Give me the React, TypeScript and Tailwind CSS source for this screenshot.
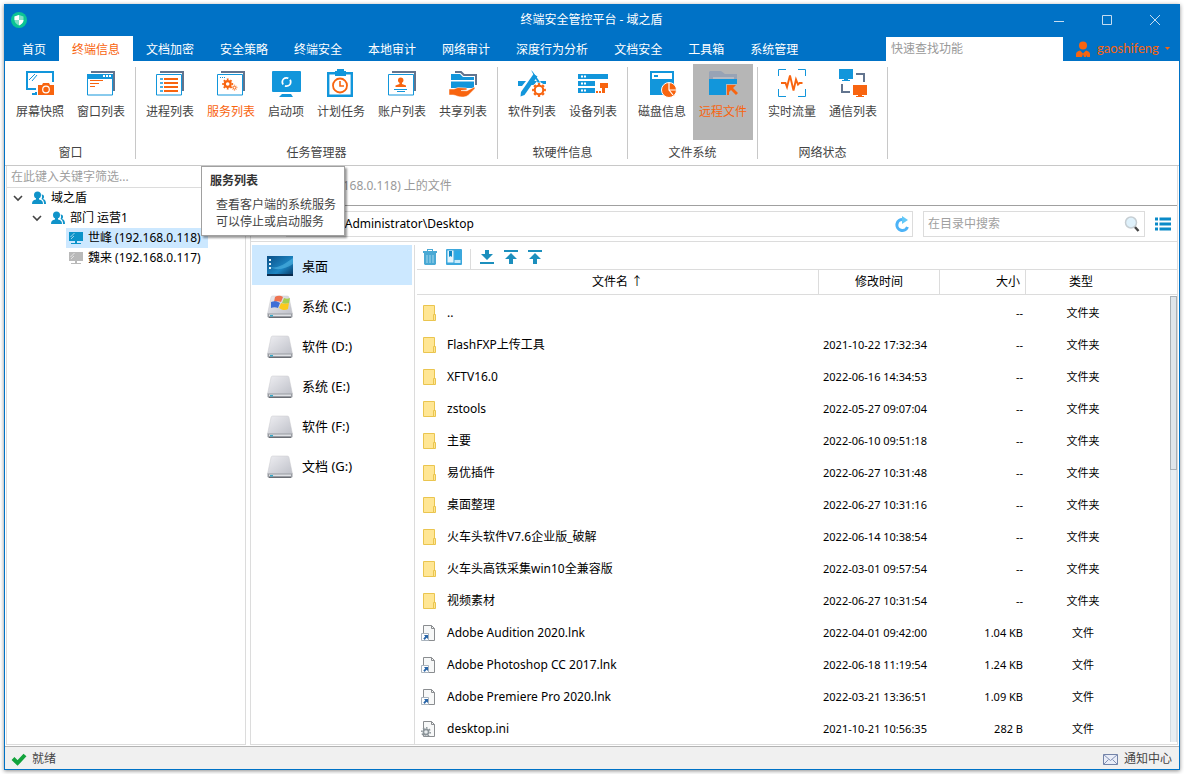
import { useState, type ReactNode } from "react";

type TRibbonItem = {
  name: string;
  icon: ReactNode;
  hot?: boolean;
  active?: boolean;
  narrow?: boolean;
};

type TRibbonGroup = {
  title: string;
  items: TRibbonItem[];
};

type TFileRow = {
  name: string;
  kind: "folder" | "link" | "ini";
  date: string;
  size: string;
  type: string;
};

const BLUE = "#1296db";
const ORANGE = "#f8640f";
const SLATE = "#62748e";

const Icon = ({ children }: { children: ReactNode }) => (
  <svg className="w-8 h-8 shrink-0" viewBox="0 0 32 32" fill="none">
    {children}
  </svg>
);

const Gear = ({ x, y, r, w }: { x: number; y: number; r: number; w: number }) => (
  <g stroke={ORANGE}>
    <circle cx={x} cy={y} r={r} strokeWidth={w} />
    <circle
      cx={x}
      cy={y}
      r={r + w / 2 + 0.6}
      strokeWidth={w * 0.8}
      pathLength={16}
      strokeDasharray="1 1"
      strokeDashoffset={0.5}
    />
  </g>
);

// two stacked windows, the base of several ribbon icons
const WindowStack = ({ children }: { children: ReactNode }) => (
  <Icon>
    <path d="M6 5h23v19" stroke={SLATE} strokeWidth="2" />
    <path d="M2.5 7.5h25v20.5h-25z" fill="#fff" stroke={BLUE} />
    {children}
  </Icon>
);

const Monitor = ({ x, y, color }: { x: number; y: number; color: string }) => (
  <path d={`M${x} ${y}h14v10h-5v1h2v1h-8v-1h2v-1h-5z`} fill={color} />
);

const groups: TRibbonGroup[] = [
  {
    title: "窗口",
    items: [
      {
        name: "屏幕快照",
        icon: (
          <Icon>
            <path d="M12 22H3V5h26v10" stroke={BLUE} strokeWidth="2" />
            <path d="M5 13l6-6M8 14l5-6" stroke={BLUE} />
            <path d="M8 27h4v-2" stroke={BLUE} strokeWidth="2" />
            <path d="M14 18h4l1-2h6l1 2h4v10H14z" fill={ORANGE} />
            <circle cx="22" cy="22.5" r="3.3" stroke="#fff" strokeWidth="1.2" />
          </Icon>
        ),
      },
      {
        name: "窗口列表",
        icon: (
          <WindowStack>
            <path d="M2 7h26v5H2z" fill={BLUE} />
            <path d="M18 9h2M21 9h2M24 9h2" stroke="#fff" strokeWidth="2" />
            <path d="M5 13.5h13M5 16.5h9M5 19.5h5" stroke={ORANGE} />
          </WindowStack>
        ),
      },
    ],
  },
  {
    title: "任务管理器",
    items: [
      {
        name: "进程列表",
        icon: (
          <WindowStack>
            <path d="M6 12h3M6 16h3M6 20h3M6 24h3" stroke={BLUE} strokeWidth="1.5" />
            <path d="M10 12h14M10 16h14M10 20h14M10 24h14" stroke={ORANGE} strokeWidth="2" />
          </WindowStack>
        ),
      },
      {
        name: "服务列表",
        hot: true,
        icon: (
          <WindowStack>
            <path d="M5 10.5h1M7 10.5h1M9 10.5h1" stroke={BLUE} />
            <Gear x={12.7} y={17} r={2.9} w={2.2} />
            <Gear x={19.5} y={20.7} r={1.4} w={1} />
          </WindowStack>
        ),
      },
      {
        name: "启动项",
        narrow: true,
        icon: (
          <Icon>
            <rect x="2" y="4" width="29" height="21" rx="1" fill={BLUE} />
            <path d="M12 27h9l2 3H9z" fill={BLUE} />
            <circle cx="16.5" cy="15" r="4.2" stroke="#fff" strokeWidth="1.8" strokeDasharray="11 2.2" strokeDashoffset="3" />
          </Icon>
        ),
      },
      {
        name: "计划任务",
        icon: (
          <Icon>
            <path d="M3.2 6.2h23.6v22.6H3.2z" stroke={BLUE} strokeWidth="2.4" />
            <path d="M12 2h7v2h2v5H10V4h2z" fill={BLUE} />
            <circle cx="15" cy="18.5" r="7" stroke={ORANGE} strokeWidth="1.8" />
            <path d="M15 14v5h4" stroke={ORANGE} strokeWidth="1.6" />
          </Icon>
        ),
      },
      {
        name: "账户列表",
        icon: (
          <WindowStack>
            <circle cx="14.7" cy="13.3" r="2.7" fill={ORANGE} />
            <path d="M13.5 15H16v2l4 1.5V20H9.5v-1.5l4-1.5z" fill={ORANGE} />
            <path d="M8 22.5h13M11 24.5h8" stroke={BLUE} />
          </WindowStack>
        ),
      },
      {
        name: "共享列表",
        icon: (
          <Icon>
            <path d="M8 5h6l3 3h12v10" stroke={SLATE} strokeWidth="2" />
            <path d="M4 7h9l3 3h11v3H4zM4 14.5h23V21H4z" fill={BLUE} />
            <path
              d="M2 22h5l4-1.5 8 .5c1.500.2 1.500 1.800 0 2l-5 .6 6 .2 6.500-3.300c1.500-.5 2 .6 1 1.500L21 28.500c-2 1.200-4 1.500-6 1.500-4 0-7-2-9-2H2z"
              fill={ORANGE}
              stroke="#fff"
              strokeWidth=".5"
            />
          </Icon>
        ),
      },
    ],
  },
  {
    title: "软硬件信息",
    items: [
      {
        name: "软件列表",
        icon: (
          <Icon>
            <path d="M2 14h8l-4 5H2zM14 14h7l-3 4h-7zM24 14h6v3h-4z" fill={BLUE} />
            <path d="M15 3l2 2 9 13h-3z" fill={BLUE} />
            <path d="M17.5 7l4 2.500L8.500 28l-4 1.500.5-4.500z" fill={BLUE} />
            <circle cx="23" cy="23" r="7.5" fill="#fff" />
            <Gear x={23} y={23} r={4.3} w={2.2} />
          </Icon>
        ),
      },
      {
        name: "设备列表",
        icon: (
          <Icon>
            <path d="M1 7h30v5H1zM1 14h17v5H1zM1 21h17v5H1z" fill={BLUE} />
            <path d="M4 9.5h2M7 9.5h2M4 16.5h2M7 16.5h2M4 23.5h2M7 23.5h2" stroke="#fff" strokeWidth="2" />
            <path d="M23 16h8v5h-3v5h-3v-5h-2zM19 24h2v2h-2zM22 24h2v2h-2z" fill={ORANGE} />
          </Icon>
        ),
      },
    ],
  },
  {
    title: "文件系统",
    items: [
      {
        name: "磁盘信息",
        icon: (
          <Icon>
            <path d="M4 4h24v24H4z" fill={BLUE} />
            <path d="M6 6h20v6H6z" fill="#fff" />
            <path d="M8 8h4v2H8z" fill={BLUE} />
            <circle cx="23" cy="23" r="7.5" fill={ORANGE} stroke="#fff" />
            <path d="M23 16v7h7M23 23l4 5" stroke="#fff" strokeWidth="1.2" />
          </Icon>
        ),
      },
      {
        name: "远程文件",
        hot: true,
        active: true,
        icon: (
          <Icon>
            <path d="M2 5l1-1h11l4 3h12v5H2z" fill="#98a3b5" />
            <path d="M6 10h21v2H6z" fill="#b6bac2" />
            <path d="M2 12h28v16H2z" fill={BLUE} />
            <path d="M19 17h11v11H19z" fill="#b6b6b6" />
            <path d="M20 18h9l-3 3 5 5-2 2-5-5-2 2v3h-2z" fill={ORANGE} />
          </Icon>
        ),
      },
    ],
  },
  {
    title: "网络状态",
    items: [
      {
        name: "实时流量",
        icon: (
          <Icon>
            <path d="M2.5 9V2.5H10M22 2.5h7.5V9M29.5 22v7.5H22M10 29.5H2.5V22" stroke={BLUE} />
            <path d="M5 16h4.5l1.5 4 3-11.5 3.5 15 2.500-11 2 5 1.500-1.500h3" stroke={ORANGE} strokeWidth="1.9" />
          </Icon>
        ),
      },
      {
        name: "通信列表",
        icon: (
          <Icon>
            <Monitor x={2} y={2} color={BLUE} />
            <Monitor x={16} y={18} color={ORANGE} />
            <path d="M19 7h8v8M13 25H5v-8" stroke={SLATE} strokeWidth="2" />
          </Icon>
        ),
      },
    ],
  },
];

const tabs = [
  "首页",
  "终端信息",
  "文档加密",
  "安全策略",
  "终端安全",
  "本地审计",
  "网络审计",
  "深度行为分析",
  "文档安全",
  "工具箱",
  "系统管理",
];

const drives = ["桌面", "系统 (C:)", "软件 (D:)", "系统 (E:)", "软件 (F:)", "文档 (G:)"];

const files: TFileRow[] = [
  { name: "..", kind: "folder", date: "", size: "--", type: "文件夹" },
  { name: "FlashFXP上传工具", kind: "folder", date: "2021-10-22 17:32:34", size: "--", type: "文件夹" },
  { name: "XFTV16.0", kind: "folder", date: "2022-06-16 14:34:53", size: "--", type: "文件夹" },
  { name: "zstools", kind: "folder", date: "2022-05-27 09:07:04", size: "--", type: "文件夹" },
  { name: "主要", kind: "folder", date: "2022-06-10 09:51:18", size: "--", type: "文件夹" },
  { name: "易优插件", kind: "folder", date: "2022-06-27 10:31:48", size: "--", type: "文件夹" },
  { name: "桌面整理", kind: "folder", date: "2022-06-27 10:31:16", size: "--", type: "文件夹" },
  { name: "火车头软件V7.6企业版_破解", kind: "folder", date: "2022-06-14 10:38:54", size: "--", type: "文件夹" },
  { name: "火车头高铁采集win10全兼容版", kind: "folder", date: "2022-03-01 09:57:54", size: "--", type: "文件夹" },
  { name: "视频素材", kind: "folder", date: "2022-06-27 10:31:54", size: "--", type: "文件夹" },
  { name: "Adobe Audition 2020.lnk", kind: "link", date: "2022-04-01 09:42:00", size: "1.04 KB", type: "文件" },
  { name: "Adobe Photoshop CC 2017.lnk", kind: "link", date: "2022-06-18 11:19:54", size: "1.24 KB", type: "文件" },
  { name: "Adobe Premiere Pro 2020.lnk", kind: "link", date: "2022-03-21 13:36:51", size: "1.09 KB", type: "文件" },
  { name: "desktop.ini", kind: "ini", date: "2021-10-21 10:56:35", size: "282 B", type: "文件" },
];

const FileIcon = ({ kind }: { kind: TFileRow["kind"] }) => (
  <svg className="w-4 h-4 shrink-0" viewBox="0 0 16 16" fill="none">
    {kind === "folder" ? (
      <>
        <path d="M2.5.5h11v15h-11z" fill="#ffe694" stroke="#eac54f" />
        <path d="M12.5 9.5h2v6h-2z" fill="#ffe694" stroke="#eac54f" />
      </>
    ) : (
      <>
        <path d="M2.5.5h8l3 3v12h-11z" fill="#f7f8f8" stroke="#8a8d90" />
        <path d="M10.5.5v3h3" stroke="#8a8d90" />
        {kind === "link" && (
          <>
            <path d="M.5 8.5h7v7h-7z" fill="#fff" stroke="#a9b3bd" />
            <path d="M3 10h4v4l-1.500-1.300L3.700 15l-1.400-1.500 1.900-2z" fill="#2a66a8" />
          </>
        )}
        {kind === "ini" && (
          <>
            <circle cx="5" cy="11" r="4.2" stroke="#8b9499" strokeWidth="1.5" pathLength="16" strokeDasharray="1 1" />
            <circle cx="5" cy="11" r="2.6" fill="#e8ecee" stroke="#8b9499" strokeWidth="1.6" />
          </>
        )}
      </>
    )}
  </svg>
);

const DriveIcon = ({ index }: { index: number }) => {
  if (index === 0) {
    return (
      <svg className="w-[26px] h-6 shrink-0" viewBox="0 0 26 24">
        <defs>
          <linearGradient id="desk" x1="0" y1="0" x2="1" y2="1">
            <stop offset="0" stopColor="#0b4f86" />
            <stop offset=".6" stopColor="#1c86c4" />
            <stop offset="1" stopColor="#06345f" />
          </linearGradient>
        </defs>
        <path d="M0 1h26v20H0z" fill="url(#desk)" />
        <path d="M3 12C10 14 18 9 26 3v6C18 14 10 16 3 12z" fill="#5cc0ea" opacity=".5" />
        <path d="M0 19h26v2H0z" fill="#0a2c4d" />
        <path d="M2 4h2v2H2zM2 8h2v2H2zM2 12h2v2H2z" fill="#e4f3fb" />
      </svg>
    );
  }
  return (
    <svg className="w-[26px] h-6 shrink-0" viewBox="0 0 26 24">
      <defs>
        <linearGradient id="disk" x1="0" y1="0" x2="1" y2="1">
          <stop offset="0" stopColor="#eeeef2" />
          <stop offset="1" stopColor="#bfc1c9" />
        </linearGradient>
      </defs>
      <path d="M4 2.5C4 1.500 5 1 6 1h14c1 0 2 .5 2 1.500L25.500 19h-25z" fill="url(#disk)" stroke="#c9c9cd" strokeWidth=".5" />
      <path d="M.5 18.5h25V22L24 23H2L.5 22z" fill="#9a9da3" />
      <path d="M2 19.5h22V21H2z" fill="#dfe1e5" />
      <path d="M3 20h3v1.500H3z" fill="#35a8c8" />
      <path d="M2 22h22v1H2z" fill="#6b6e74" />
      {index === 1 && (
        <>
          <path d="M8 2c3-2 6-1 8 0l-2 5c-2-1-5-1-7 0z" fill="#ee7350" />
          <path d="M17 3c2 1 4 1 6 0l-1 5c-2 1-5 1-7 0z" fill="#a6cf4f" />
          <path d="M4 7c3-1 6-1 9 1l-2 5c-2-1-5-1-7 0z" fill="#3f6fd6" />
          <path d="M14 8c2 1 5 1 8 0l-1 6c-3 2-6 1-9-1z" fill="#fbc91c" />
        </>
      )}
    </svg>
  );
};

const UsersIcon = () => (
  <svg className="w-4 h-4 shrink-0" viewBox="0 0 16 16" fill="#1093c9">
    <circle cx="6.5" cy="5" r="3.5" />
    <path d="M1 14c0-3 1.500-4 4-4.500V8h3v1.500c2.500.5 4 1.500 4 4.500z" />
    <path d="M10.500 4.500c2.500-.5 3.500 3 1.500 4.500 2 .5 3 2 3 5h-2c0-2.500-.5-4-2.500-5 .8-1.500.8-3 0-4.500z" />
  </svg>
);

const PcIcon = ({ color }: { color: string }) => (
  <svg className="w-4 h-4 shrink-0" viewBox="0 0 16 16" fill={color}>
    <path d="M1 2h14v9H1zM7 11h2v2H7zM3 13h10v1H3z" />
    <path d="M2.5 7l4-4M3 9l3-3" stroke="#fff" strokeWidth=".6" />
  </svg>
);

const Chevron = () => (
  <svg className="w-4 h-4 shrink-0" viewBox="0 0 16 16" fill="none">
    <path d="M4 6l4 4 4-4" stroke="#444" strokeWidth="1.6" />
  </svg>
);

const TransferIcon = ({ down }: { down?: boolean }) => (
  <svg className="w-4 h-4" viewBox="0 0 16 16" fill="#1c8fbd">
    {down ? <path d="M6 1h4v4h4l-6 6-6-6h4zM1 13h14v2H1z" /> : <path d="M1 1h14v2H1zM8 4l6 6h-4v5H6v-5H2z" />}
  </svg>
);

const TitleBar = () => (
  <div className="h-8 flex items-center text-white">
    <svg className="w-4 h-4 ml-[6px]" viewBox="0 0 16 16">
      <circle cx="8" cy="8" r="8" fill="#0cc494" />
      <path d="M8 3l4.500 1.500V8c0 2.500-2 4.500-4.500 5.500C5.500 12.500 3.500 10.500 3.500 8V4.500z" fill="#7fe0c6" />
      <path d="M8 3v5H3.500V4.500zM8 8h4.500c0 2.500-2 4.500-4.500 5.500z" fill="#fff" />
    </svg>
    <h1 className="flex-1 text-center pl-[121px]">终端安全管控平台 - 域之盾</h1>
    <button aria-label="最小化" className="w-12 h-8 flex items-center justify-center">
      <svg className="w-3 h-3" viewBox="0 0 12 12" stroke="#c5dcf0">
        <path d="M1 7.5h10" />
      </svg>
    </button>
    <button aria-label="最大化" className="w-12 h-8 flex items-center justify-center">
      <svg className="w-3 h-3" viewBox="0 0 12 12" stroke="#c5dcf0" fill="none">
        <path d="M1.5 1.5h9v9h-9z" />
      </svg>
    </button>
    <button aria-label="关闭" className="w-12 h-8 flex items-center justify-center">
      <svg className="w-3 h-3" viewBox="0 0 12 12" stroke="#c5dcf0">
        <path d="M1 1l10 10M11 1L1 11" />
      </svg>
    </button>
  </div>
);

const RibbonGroup = ({ group }: { group: TRibbonGroup }) => (
  <section className="h-[92px] mt-[6px] px-1 border-r border-[#c8c8c8] flex flex-col justify-between">
    <div className="flex gap-px -mt-[3px]">
      {group.items.map((item) => (
        <button
          key={item.name}
          className={`h-[76px] pt-[3px] flex flex-col items-center ${item.narrow ? "w-12" : "w-[60px]"} ${
            item.active ? "bg-[#b6b6b6]" : ""
          } ${item.hot ? "text-[#f8640f]" : ""}`}
        >
          {item.icon}
          <span className="leading-4 mt-[5px] whitespace-nowrap">{item.name}</span>
        </button>
      ))}
    </div>
    <h2 className="text-center leading-3">{group.title}</h2>
  </section>
);

const ClientTree = () => (
  <aside className="w-60 shrink-0 border-x border-b border-[#dcdcdc] ml-px flex flex-col">
    <input
      aria-label="筛选"
      placeholder="在此键入关键字筛选..."
      className="h-[22px] px-1 border-b border-[#dcdcdc] placeholder:text-[#a0a0a0] outline-none"
    />
    <ul className="text-black">
      <li className="h-5 pl-[3px] flex items-center">
        <Chevron />
        <span className="pl-[5px] flex items-center gap-1">
          <UsersIcon />
          域之盾
        </span>
      </li>
      <li className="h-5 pl-[22px] flex items-center">
        <Chevron />
        <span className="pl-[5px] flex items-center gap-1">
          <UsersIcon />
          部门 运营1
        </span>
      </li>
      <li className="h-5 pl-[59px] flex">
        <span className="w-[142px] pl-0.5 bg-[#cce8ff] flex items-center gap-1 whitespace-nowrap">
          <PcIcon color="#0a93c9" />
          世峰 (192.168.0.118)
        </span>
      </li>
      <li className="h-5 pl-[61px] flex items-center gap-1">
        <PcIcon color="#b9b9b9" />
        魏来 (192.168.0.117)
      </li>
    </ul>
  </aside>
);

const FileTable = () => (
  <table className="w-full table-fixed border-separate border-spacing-0 text-black">
    <colgroup>
      <col />
      <col className="w-[121px]" />
      <col className="w-[86px]" />
      <col className="w-[110px]" />
      <col className="w-[41px]" />
    </colgroup>
    <thead>
      <tr className="h-[26px]">
        <th className="p-0 font-normal border-y border-r border-[#dcdcdc]">文件名 ↑</th>
        <th className="p-0 font-normal border-y border-r border-[#dcdcdc]">修改时间</th>
        <th className="p-0 pr-[5px] font-normal border-y border-r border-[#dcdcdc] text-right">大小</th>
        <th className="p-0 font-normal border-y border-[#dcdcdc]">类型</th>
        <th className="p-0 border-y border-[#dcdcdc]"></th>
      </tr>
    </thead>
    <tbody>
      {files.map((file) => (
        <tr key={file.name} className="h-8">
          <td className="p-0 pl-1 pt-1">
            <span className="flex items-center gap-2.5 whitespace-nowrap">
              <FileIcon kind={file.kind} />
              {file.name}
            </span>
          </td>
          <td className="p-0 pl-1 pt-1 text-[11px] whitespace-nowrap">{file.date}</td>
          <td className="p-0 pr-[3px] pt-1 text-[11px] text-right">{file.size}</td>
          <td className="p-0 pl-1 pt-1 text-[11px] text-center">{file.type}</td>
          <td className="p-0"></td>
        </tr>
      ))}
    </tbody>
  </table>
);

const RemoteFiles = () => (
  <main className="flex-1 min-w-0 ml-1 mr-px border-x border-b border-[#dcdcdc] flex flex-col">
    <h2 className="h-10 pl-2.5 flex items-center border-b border-[#a0a0a0] text-[#999]">
      浏览 世峰 (192.168.0.118) 上的文件
    </h2>
    <div className="h-9 pl-[35px] pr-1.5 border-b border-[#dcdcdc] flex items-center text-black">
      <div className="h-[26px] flex-1 border border-[#dcdcdc] flex items-center">
        <input
          aria-label="路径"
          defaultValue="C:\Users\Administrator\Desktop"
          className="flex-1 min-w-0 h-6 pl-1.5 outline-none"
        />
        <button aria-label="刷新" className="w-[18px] h-6 flex items-center">
          <svg className="w-4 h-4" viewBox="0 0 16 16" fill="none">
            <path d="M13.500 11A5.500 5.500 0 1 1 9 3.500" stroke="#4db3f7" strokeWidth="3" />
            <path d="M8 0l6 4-6 4z" fill="#62c9f8" />
          </svg>
        </button>
      </div>
      <div className="h-[26px] w-[222px] ml-2.5 border border-[#dcdcdc] flex items-center">
        <input
          aria-label="在目录中搜索"
          placeholder="在目录中搜索"
          className="flex-1 min-w-0 h-6 pl-1 outline-none placeholder:text-[#a0a0a0]"
        />
        <button aria-label="搜索" className="w-5 h-6 flex items-center">
          <svg className="w-4 h-4" viewBox="0 0 16 16" fill="none">
            <path d="M10.500 10.500l4 4.500" stroke="#444" strokeWidth="2.4" />
            <circle cx="7" cy="6.5" r="5.5" fill="#dff1fb" stroke="#c6ced3" strokeWidth="1.5" />
          </svg>
        </button>
      </div>
      <button aria-label="列表视图" className="w-[26px] h-6 flex items-center justify-end">
        <svg className="w-4 h-4" viewBox="0 0 16 16" stroke="#0a8ac8" strokeWidth="3">
          <path d="M0 3h3M4.5 3H16M0 8h3M4.5 8H16M0 13h3M4.5 13H16" />
        </svg>
      </button>
    </div>
    <div className="flex-1 min-h-0 flex pt-[3px]">
      <nav className="w-[164px] shrink-0 pl-px pr-0.5 border-r border-[#dcdcdc] text-black text-[13px]">
        {drives.map((drive, i) => (
          <button
            key={drive}
            className={`w-full h-10 pl-[15px] pt-1 flex items-center gap-[9px] ${i === 0 ? "bg-[#cce8ff]" : ""}`}
          >
            <DriveIcon index={i} />
            {drive}
          </button>
        ))}
      </nav>
      <div className="flex-1 min-w-0 pl-0.5 relative overflow-hidden">
        <div className="h-6 pl-[5px] flex items-center">
          <button aria-label="删除">
            <svg className="w-4 h-4" viewBox="0 0 16 16">
              <path d="M5 0h6v2h4v2H1V2h4zM2 4h12v11l-1 1H3l-1-1z" fill="#4aa9d4" />
              <path d="M6 1h4v1H6z" fill="#fff" />
              <path d="M5 6v8M8 6v8M11 6v8" stroke="#a4d8ee" />
            </svg>
          </button>
          <button aria-label="重命名" className="ml-2">
            <svg className="w-4 h-4" viewBox="0 0 16 16">
              <rect width="16" height="16" rx="1" fill="#3ba7dc" />
              <path d="M1.5 1.5h6v12h-6z" fill="#e6f5fc" />
              <path d="M3 2h3v6L4.500 7 3 8z" fill="#0b86c4" />
              <path d="M9 2h5v8H9z" fill="#29a9e6" />
              <path d="M8.500 11h6v3h-6z" fill="#c8eafa" />
            </svg>
          </button>
          <span className="w-px h-5 mx-2 mt-1 bg-[#dcdcdc]"></span>
          <div className="flex gap-2">
            <button aria-label="下载">
              <TransferIcon down />
            </button>
            <button aria-label="上传文件">
              <TransferIcon />
            </button>
            <button aria-label="上传文件夹">
              <TransferIcon />
            </button>
          </div>
        </div>
        <FileTable />
        <div className="absolute right-0 top-[51px] bottom-0.5 w-[7px] border-x border-[#d4dbe1] bg-[#e9eef2]">
          <div className="-mx-px h-[174px] border border-[#a9b0b6] bg-[#dfe5ea]"></div>
        </div>
      </div>
    </div>
  </main>
);

const ServiceTooltip = () => (
  <div
    role="tooltip"
    className="absolute left-[196px] top-0 z-10 w-36 h-[70px] pt-1.5 pl-2 bg-white border border-[#a0a0a0] shadow-[2px_2px_2px_rgba(0,0,0,0.4)]"
  >
    <p className="font-bold leading-4 text-[#333]">服务列表</p>
    <p className="mt-[7px] pl-1.5 leading-[17px] whitespace-nowrap">
      查看客户端的系统服务
      <br />
      可以停止或启动服务
    </p>
  </div>
);

export default function App() {
  const [activeTab, setActiveTab] = useState("终端信息");

  return (
    <div className="h-screen p-1 bg-white font-['Noto_Sans','Noto_Sans_CJK_SC',sans-serif] text-xs text-[#444]">
      <div className="h-full flex flex-col bg-white border border-t-0 border-[#0072c6] shadow-[0_1px_4px_rgba(0,0,0,0.45)]">
        <header className="bg-[#0072c6]">
          <TitleBar />
          <div className="h-[25px] pl-1 flex">
            <nav className="flex">
              {tabs.map((tab) => (
                <button
                  key={tab}
                  onClick={() => setActiveTab(tab)}
                  className={`px-[13px] pt-0.5 whitespace-nowrap ${
                    tab === activeTab ? "bg-white text-[#f8640f]" : "text-white"
                  }`}
                >
                  {tab}
                </button>
              ))}
            </nav>
            <input
              aria-label="快速查找功能"
              placeholder="快速查找功能"
              className="ml-auto mt-px w-[177px] px-[5px] bg-white outline-none placeholder:text-[#999]"
            />
            <button className="w-[116px] pl-3 flex items-center gap-1.5 text-[#f8640f] font-['Lato',sans-serif] text-[13px]">
              <svg className="w-4 h-4" viewBox="0 0 16 16" fill="#f8640f">
                <circle cx="8" cy="4.5" r="4" />
                <path d="M1 16v-3c0-2 2-3 4-3.500l3 3 3-3c2 .5 4 1.500 4 3.500v3h-3v-2l-1 2H9l-1-3-1 3z" />
              </svg>
              gaoshifeng
              <svg className="w-[5px] h-[5px]" viewBox="0 0 5 5" fill="#f8640f">
                <path d="M0 1h5L2.5 4z" />
              </svg>
            </button>
          </div>
        </header>
        <div className="h-[105px] shrink-0 pl-px flex border-b border-[#c8c8c8]">
          {groups.map((group) => (
            <RibbonGroup key={group.title} group={group} />
          ))}
        </div>
        <div className="flex-1 min-h-0 pb-px flex relative">
          <ClientTree />
          <RemoteFiles />
          <ServiceTooltip />
        </div>
        <footer className="h-[23px] shrink-0 px-1.5 pt-px border-t border-[#b4b4b4] bg-[#f0f0f0] flex items-center justify-between">
          <span className="flex items-center gap-[5px]">
            <svg className="w-4 h-4" viewBox="0 0 16 16" fill="none">
              <path d="M2 7.5L6.500 12 14 4" stroke="#12a33c" strokeWidth="4" />
            </svg>
            就绪
          </span>
          <button className="pr-px flex items-center gap-[5px]">
            <svg className="w-4 h-4" viewBox="0 0 16 16" fill="none">
              <path d="M.5 3.5h14v10H.5z" fill="#e9edf8" stroke="#7383a8" />
              <path d="M.5 3.5l7 6 7-6M.5 13.5l5-5M14.5 13.5l-5-5" stroke="#8492b4" />
            </svg>
            通知中心
          </button>
        </footer>
      </div>
    </div>
  );
}
